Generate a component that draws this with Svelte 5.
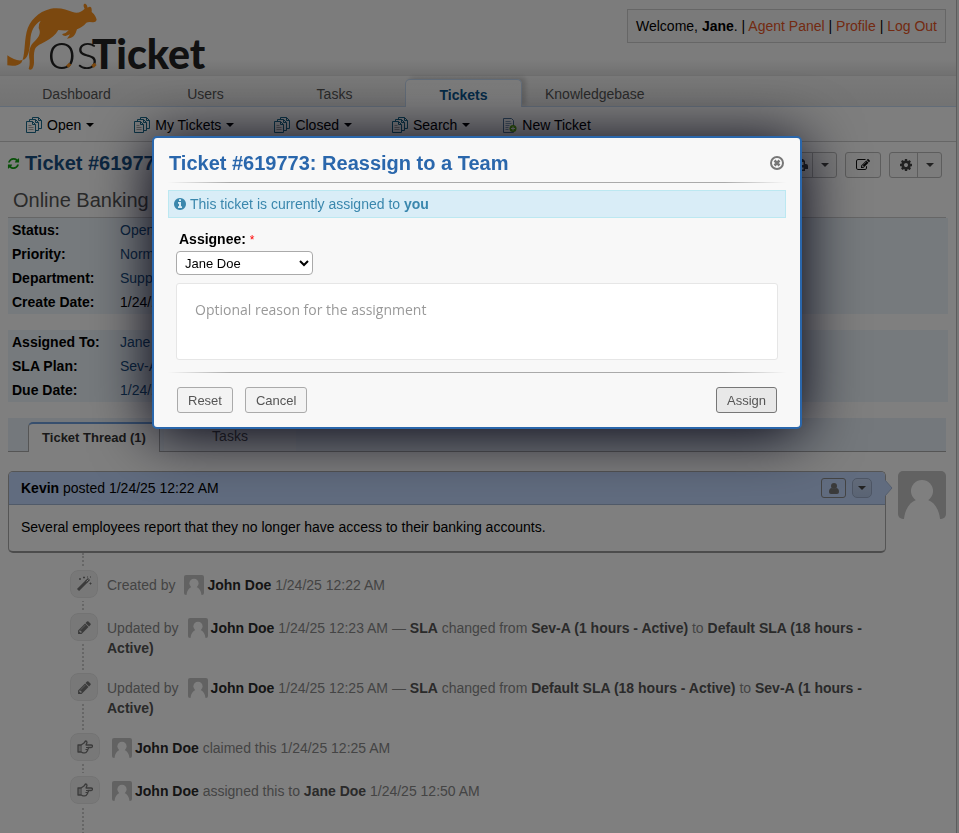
<script>
  const nav = ['Dashboard', 'Users', 'Tasks', 'Tickets', 'Knowledgebase'];
  const queues = ['Open', 'My Tickets', 'Closed', 'Search'];
  const details = [
    ['Status:', 'Open', true],
    ['Priority:', 'Normal', true],
    ['Department:', 'Support', true],
    ['Create Date:', '1/24/25 12:22 AM', false]
  ];
  const assignment = [
    ['Assigned To:', 'Jane Doe'],
    ['SLA Plan:', 'Sev-A (1 hours - Active)'],
    ['Due Date:', '1/24/25 1:22 AM']
  ];
  const events = [
    { icon: 'magic', before: 'Created by', parts: [['1/24/25 12:22 AM']] },
    {
      icon: 'pencil', before: 'Updated by',
      parts: [['1/24/25 12:23 AM — '], ['SLA', true], [' changed from '], ['Sev-A (1 hours - Active)', true], [' to '], ['Default SLA (18 hours - Active)', true]]
    },
    {
      icon: 'pencil', before: 'Updated by',
      parts: [['1/24/25 12:25 AM — '], ['SLA', true], [' changed from '], ['Default SLA (18 hours - Active)', true], [' to '], ['Sev-A (1 hours - Active)', true]]
    },
    { icon: 'hand', before: '', parts: [['claimed this 1/24/25 12:25 AM']] },
    { icon: 'hand', before: '', parts: [['assigned this to '], ['Jane Doe', true], [' 1/24/25 12:50 AM']] }
  ];
  let assignee = $state('Jane Doe');
  let reason = $state('');
</script>

{#snippet avatar(size)}
  <svg class="avatar" width={size} height={size} viewBox="0 0 48 48" aria-hidden="true">
    <rect width="48" height="48" rx="5" fill="#c4c4c4" />
    <circle cx="24" cy="20" r="11" fill="#fff" />
    <path d="M6 48C7 38 12 31 18 29h12c6 2 11 9 12 19z" fill="#fff" />
  </svg>
{/snippet}

{#snippet caret()}
  <svg width="8" height="4" viewBox="0 0 8 4" aria-hidden="true"><path d="M0 0h8L4 4z" fill="currentColor" /></svg>
{/snippet}

{#snippet pages()}
  <svg width="16" height="16" viewBox="0 0 16 16" fill="#fff" stroke="#1b6a8c" aria-hidden="true">
    <path d="M6.500 10.500v-10h6l3 3v8h-3M12.500.5v3h3" />
    <path d="M3.500 12.500v-10h6l3 3v8h-3M9.500 2.500v3h3" />
    <path d="M.5 4.500h6l3 3v8h-9zM6.500 4.500v3h3" />
    <path d="M2.500 8.500h3M2.500 10.500h5M2.500 12.500h5" stroke="#aaa" />
  </svg>
{/snippet}

{#snippet eventIcon(name)}
  {#if name === 'pencil'}
    <svg width="15" height="15" viewBox="0 0 1792 1792" fill="currentColor" aria-hidden="true"><path d="M491 1536l91-91-235-235-91 91v107h128v128h107zm523-928q0-22-22-22-10 0-17 7l-542 542q-7 7-7 17 0 22 22 22 10 0 17-7l542-542q7-7 7-17zm-54-192l416 416-832 832h-416v-416zm683 96q0 53-37 90l-166 166-416-416 166-165q36-38 90-38 53 0 91 38l235 234q37 39 37 91z" /></svg>
  {:else if name === 'magic'}
    <svg width="16" height="16" viewBox="0 0 16 16" fill="none" stroke="currentColor" aria-hidden="true">
      <path d="M2 14 10.500 5.500" stroke-width="3" />
      <path d="m10 6 3-3" stroke-width="3" /><path d="m10.500 5.500 2-2" stroke="#f4f4f4" />
      <path d="M3 3h2M4 2v2M7 1.500h2M8 .5v2M13.500 7.500h2M14.500 6.500v2M11 1h1M14 1h1" />
    </svg>
  {:else}
    <svg width="16" height="14" viewBox="0 0 16 14" fill="none" stroke="currentColor" stroke-linejoin="round" aria-hidden="true">
      <path d="M1 5h3l3-2 1.500-2q1.500 0 1.500 1.500L9 5h5q1.500 0 1.500 1.200T14 7.500h-3q1 1.300-.5 2 .5 1.300-.7 1.800-.3 1.500-2 1.500H6L4 12H1z" stroke-width="1.300" />
      <path d="M4 5v7M9 7.500h2M8.500 9.500h2" />
      <path d="M1 5h2v7H1z" fill="currentColor" fill-opacity=".4" stroke="none" />
    </svg>
  {/if}
{/snippet}

<div class="page">
  <header>
    <a class="logo" href="#home" aria-label="osTicket home">
      <svg width="220" height="74" viewBox="0 0 660 222">
        <path fill="#f7901e" d="M22 196q30 5 42-8c12-20 8-60 16-93 8-32 34-60 72-69 28-5 48 3 66 10 16 6 28-2 36-10-5-9-4-16 2-15q5 2 7 12 7-5 11 0 2 7 1 13c10 8 14 18 15 24q-3 8-12 7-12-2-19 1c-7 11-19 15-28 20l-4 11q-5 12-16 15l-10 2q6-8 9-13l-13 5q-11-1-10-6 12-2 19-11-17 1-31-1c-8 15-22 25-40 35-16 8-28 14-31 25-6 22 3 42-7 56q-6 6-11 1 4-14 3-25c-5-24 0-46 15-58 15-15 19-26 12-40q-1-12 6-22c-20 12-29 30-31 59-2 30-6 48-17 57q-22 10-52-12z" />
        <text x="142" y="207" class="logo-thin">os</text>
        <text x="275" y="207" class="logo-bold">Ticket</text>
        <path d="m198 197 9-9 7 6-8 9zM274 196l9-8 7 7-9 9z" fill="#f7901e" />
      </svg>
    </a>
    <p class="welcome">Welcome, <strong>Jane</strong>. | <a href="#agent">Agent Panel</a> | <a href="#profile">Profile</a> | <a href="#logout">Log Out</a></p>
  </header>

  <nav class="main-nav">
    {#each nav as item}
      <a href="#{item}" class:active={item === 'Tickets'}>{item}</a>
    {/each}
  </nav>
  <nav class="sub-nav">
    {#each queues as q}
      <a href="#{q}">{@render pages()}<span>{q}</span>{@render caret()}</a>
    {/each}
    <a class="new" href="#new">
      <svg width="15" height="15" viewBox="0 0 15 15" aria-hidden="true">
        <path d="M1.500.5h8l2 2v12h-10z" fill="#fff" stroke="#53789c" />
        <path d="M3.500 3.500h5M3.500 5.500h6M3.500 7.500h4M3.500 9.500h3M3.500 11.500h3" stroke="#8ba5bf" />
        <circle cx="11" cy="10.500" r="3.500" fill="#5bad0d" /><path d="M11 8.500v4M9 10.500h4" stroke="#fff" />
      </svg><span>New Ticket</span></a>
  </nav>

  <main>
    <div class="title-row">
      <h2>
        <svg width="13" height="13" viewBox="0 0 1792 1792" fill="#12a012" aria-hidden="true"><path d="M1639 1056q0 5-1 7-64 268-268 434.500t-478 166.500q-146 0-282.500-55t-243.500-157l-129 129q-19 19-45 19t-45-19-19-45v-448q0-26 19-45t45-19h448q26 0 45 19t19 45-19 45l-137 137q71 66 161 102t187 36q134 0 250-65t186-179q11-17 53-117 8-23 30-23h192q13 0 22.500 9.500t9.500 22.500zm25-800v448q0 26-19 45t-45 19h-448q-26 0-45-19t-19-45 19-45l138-138q-148-137-349-137-134 0-250 65t-186 179q-11 17-53 117-8 23-30 23h-199q-13 0-22.500-9.500t-9.500-22.500v-7q65-268 270-434.500t480-166.500q146 0 284 55.500t245 156.500l130-129q19-19 45-19t45 19 19 45z" /></svg>
        <a href="#ticket">Ticket #619773</a>
      </h2>
      <div class="tools">
        <button class="tool split" aria-label="Print">
          <span><svg width="14" height="14" viewBox="0 0 14 14" aria-hidden="true"><path d="M3 1h6l2 2v3h1q2 0 2 2v3h-3v2H3v-2H0V8q0-2 2-2h1zM4.500 2.500V7h5V4H8V2.500zm0 7v2h5v-2z" fill="#444" fill-rule="evenodd" /></svg></span>
          <span>{@render caret()}</span>
        </button>
        <button class="tool" aria-label="Edit">
          <svg width="14" height="14" viewBox="0 0 1792 1792" fill="#111" aria-hidden="true"><path d="M888 1184l116-116-152-152-116 116v56h96v96h56zm440-720q-16-16-33 1l-350 350q-17 17-1 33t33-1l350-350q17-17 1-33zm80 594v190q0 119-84.500 203.500t-203.500 84.500h-832q-119 0-203.500-84.500t-84.500-203.500v-832q0-119 84.500-203.500t203.500-84.500h832q63 0 117 25 15 7 18 23 3 17-9 29l-49 49q-14 14-32 8-23-6-45-6h-832q-66 0-113 47t-47 113v832q0 66 47 113t113 47h832q66 0 113-47t47-113v-126q0-13 9-22l64-64q15-15 35-7t20 29zm-96-738l288 288-672 672h-288v-288zm444 132l-92 92-288-288 92-92q28-28 68-28t68 28l152 152q28 28 28 68t-28 68z" /></svg>
        </button>
        <button class="tool split" aria-label="More">
          <span><svg width="14" height="14" viewBox="0 0 1792 1792" fill="#444" aria-hidden="true"><path d="M1152 896q0-106-75-181t-181-75-181 75-75 181 75 181 181 75 181-75 75-181zm512-109v222q0 12-8 23t-20 13l-185 28q-19 54-39 91 35 50 107 138 10 12 10 25t-9 23q-27 37-99 108t-94 71q-12 0-26-9l-138-108q-44 23-91 38-16 136-29 186-7 28-36 28h-222q-14 0-24.500-8.500t-11.500-21.500l-28-184q-49-16-90-37l-141 107q-10 9-25 9-14 0-25-11-126-114-165-168-7-10-7-23 0-12 8-23 15-21 51-66.500t54-70.500q-27-50-41-99l-183-27q-13-2-21-12.500t-8-23.500v-222q0-12 8-23t19-13l186-28q14-46 39-92-40-57-107-138-10-12-10-24 0-10 9-23 26-36 98.500-107.500t94.500-71.500q13 0 26 10l138 107q44-23 91-38 16-136 29-186 7-28 36-28h222q14 0 24.500 8.500t11.500 21.500l28 184q49 16 90 37l142-107q9-9 24-9 13 0 25 10 129 119 165 170 7 8 7 22 0 12-8 23-15 21-51 66.500t-54 70.500q26 50 41 98l183 28q13 2 21 12.500t8 23.500z" /></svg></span>
          <span>{@render caret()}</span>
        </button>
      </div>
    </div>

    <h3>Online Banking Access</h3>

    <section class="info">
      <table>
        <tbody>
          {#each details as [label, value, link]}
            <tr><th>{label}</th><td>{#if link}<a href="#edit">{value}</a>{:else}{value}{/if}</td></tr>
          {/each}
        </tbody>
      </table>
      <p class="user"><a href="#org">(Administrators)</a></p>
    </section>
    <section class="info">
      <table>
        <tbody>
          {#each assignment as [label, value]}
            <tr><th>{label}</th><td><a href="#edit">{value}</a></td></tr>
          {/each}
        </tbody>
      </table>
    </section>

    <nav class="thread-tabs">
      <a class="active" href="#thread">Ticket Thread (1)</a>
      <a href="#tasks">Tasks</a>
    </nav>

    <div class="post">
      <article>
        <div class="post-head">
          <p><strong>Kevin</strong> posted 1/24/25 12:22 AM</p>
          <button class="who" aria-label="Ticket owner"><svg width="10" height="11" viewBox="0 0 10 11" aria-hidden="true"><circle cx="5" cy="3" r="3" fill="#777" /><path d="M0 9q0-4 3-4 2 2 4 0 3 0 3 4 0 2-2 2H2Q0 11 0 9z" fill="#777" /></svg></button>
          <button class="menu" aria-label="Post actions">{@render caret()}</button>
          <svg class="arrow" width="8" height="16" viewBox="0 0 8 16" aria-hidden="true"><path d="M0 0v16l7-8z" fill="#c3d9ff" /><path d="m0 0 7 8-7 8" fill="none" stroke="#a9bcdc" /></svg>
        </div>
        <p class="post-body">Several employees report that they no longer have access to their banking accounts.</p>
      </article>
      {@render avatar(48)}
    </div>

    <ul class="events">
      {#each events as e}
        <li>
          <span class="badge" class:wide={e.icon === 'hand'}>{@render eventIcon(e.icon)}</span>
          <p>{e.before}<span class="face" class:lead={!e.before}>{@render avatar(20)}</span><strong class="name">John Doe</strong>{' '}{#each e.parts as [text, bold]}{#if bold}<b>{text}</b>{:else}{text}{/if}{/each}</p>
        </li>
      {/each}
    </ul>
  </main>
</div>

<div class="overlay"></div>

<div class="dialog" role="dialog" aria-modal="true" aria-labelledby="dialog-title">
  <div class="dialog-head">
    <h1 id="dialog-title">Ticket #619773: Reassign to a Team</h1>
    <button class="close" aria-label="Close"><svg width="14" height="14" viewBox="0 0 14 14" fill="none" stroke="#777" aria-hidden="true"><circle cx="7" cy="7" r="6" stroke-width="2" /><path d="m4.500 4.500 5 5m0-5-5 5" stroke-width="2.500" /></svg></button>
  </div>
  <hr />
  <p class="notice">
    <svg width="12" height="12" viewBox="128 128 1536 1536" fill="#3a87ad" aria-hidden="true"><path d="M1152 1376v-160q0-14-9-23t-23-9h-96v-512q0-14-9-23t-23-9h-320q-14 0-23 9t-9 23v160q0 14 9 23t23 9h96v320h-96q-14 0-23 9t-9 23v160q0 14 9 23t23 9h448q14 0 23-9t9-23zm-128-896v-160q0-14-9-23t-23-9h-192q-14 0-23 9t-9 23v160q0 14 9 23t23 9h192q14 0 23-9t9-23zm640 416q0 209-103 385.500t-279.500 279.500-385.500 103-385.500-103-279.500-279.500-103-385.500 103-385.500 279.500-279.500 385.500-103 385.500 103 279.500 279.500 103 385.500z" /></svg>
    <span>This ticket is currently assigned to <strong>you</strong></span>
  </p>
  <form onsubmit={(ev) => ev.preventDefault()}>
    <label for="assignee">Assignee: <span class="req">*</span></label>
    <select id="assignee" bind:value={assignee}><option>Jane Doe</option><option>John Doe</option></select>
    <textarea aria-label="Reason" placeholder="Optional reason for the assignment" bind:value={reason}></textarea>
    <hr />
    <div class="actions">
      <button type="reset">Reset</button>
      <button type="button">Cancel</button>
      <button type="submit" class="primary">Assign</button>
    </div>
  </form>
</div>

<style>
  :global(body) { background: #eee; overflow: hidden; }
  :global(body), button, select { font-family: "Liberation Sans", Arial, sans-serif; font-size: 14px; }
  * { box-sizing: border-box; }
  p, h1, h2, h3, ul { margin: 0; padding: 0; }
  a { color: #184e81; text-decoration: none; }
  svg { display: block; flex: none; }
  button { cursor: pointer; }

  .page { min-height: 100vh; margin-right: 2px; background: #fff; border-right: 1px solid #bbb; line-height: 20px; color: #000; }

  header { display: flex; justify-content: space-between; align-items: flex-start; height: 76px; padding-right: 10px; background: linear-gradient(#f8f8f8 80%, #e2e2e2); border-bottom: 1px solid #ddd; }
  .logo-thin { font-family: Lato, "Liberation Sans", sans-serif; font-weight: 300; font-size: 156px; fill: #222; }
  .logo-bold { font-family: Lato, "Liberation Sans", sans-serif; font-weight: 900; font-size: 123px; fill: #222; }
  .welcome { margin-top: 9px; padding: 6px 8px; border: 1px solid #ccc; background: #f4f4f4; }
  .welcome a { color: #e65524; }

  .main-nav { display: flex; gap: 12px; align-items: flex-end; height: 31px; padding-left: 18px; background: linear-gradient(#f3f3f3, #e6e6e6); border-bottom: 1px solid #c5d9f1; }
  .main-nav a { min-width: 117px; height: 27px; padding: 0 11px; line-height: 30px; text-align: center; color: #555; }
  .main-nav a.active { height: 28px; margin-bottom: -1px; background: linear-gradient(#f8f8f8, #fff); border: 1px solid #c5d9f1; border-bottom: 0; border-radius: 5px 5px 0 0; box-shadow: 4px -2px 4px rgba(0, 0, 0, .15); clip-path: inset(-6px -10px 0); color: #0a568e; font-weight: 700; }

  .sub-nav { display: flex; gap: 40px; height: 35px; padding: 2px 0 0 26px; align-items: center; border-bottom: 1px solid #ccc; background: #fcfcfc; }
  .sub-nav a { display: flex; align-items: center; gap: 5px; color: #000; }
  .sub-nav .new { margin-left: -8px; }

  main { padding: 10px 8px 0; }
  .title-row { display: flex; justify-content: space-between; height: 26px; padding-right: 6px; }
  h2 { display: flex; align-items: center; gap: 5px; margin-left: -1px; padding-bottom: 4px; font-size: 20px; }
  .tools { display: flex; gap: 8px; }
  .tool { display: flex; align-items: center; justify-content: center; min-width: 36px; height: 26px; padding: 0; border: 1px solid #bbb; border-radius: 3px; background: #f8f8f8; color: #444; }
  .tool.split span { display: flex; align-items: center; justify-content: center; height: 24px; width: 23px; }
  .tool.split span:first-child { width: 28px; padding-left: 4px; border-right: 1px solid #bbb; }

  h3 { margin-right: 2px; padding: 10px 5px 5px; line-height: 24px; font-weight: 400; font-size: 20px; color: #555; border-bottom: 1px solid #ccc; }
  .info { display: flex; margin: 0 0 16px; background: #edf5fb; padding-left: 4px; }
  .info table { flex: 1; border-collapse: collapse; }
  .info th { width: 108px; padding: 0; text-align: left; }
  .info td { padding: 0; height: 24px; }
  .info .user { flex: 1; padding: 2px 0 0 256px; white-space: nowrap; }

  .thread-tabs { display: flex; gap: 4px; height: 34px; margin-right: 2px; padding: 4px 0 0 20px; background: #e9f1f8; border-bottom: 1px solid #aaa; }
  .thread-tabs a { width: 132px; height: 29px; line-height: 28px; text-align: center; color: #555; background: #f0f4f9; }
  .thread-tabs a.active { height: 30px; border: 1px solid #aaa; border-top: 2px solid #6f9fdc; border-bottom: 0; border-radius: 5px 5px 0 0; background: #fff; color: #333; font-weight: 700; font-size: 13px; }

  .post { display: flex; gap: 12px; align-items: flex-start; margin: 19px 2px 0 0; }
  article { flex: 1; border: 1px solid #aaa; border-bottom: 2px solid #999; border-radius: 5px; }
  .post-head { position: relative; display: flex; align-items: center; gap: 6px; height: 33px; padding: 0 13px 0 12px; background: #c3d9ff; border-bottom: 1px solid #a0b4d2; border-radius: 4px 4px 0 0; }
  .post-head p { flex: 1; }
  .who, .menu { display: flex; align-items: center; justify-content: center; height: 20px; padding: 0; border: 1px solid #888; border-radius: 3px; background: none; color: #444; }
  .who { width: 25px; }
  .menu { width: 20px; border-color: #9aabc8; border-radius: 5px; background: linear-gradient(#c3d4f2, #b4c8e8); }
  .arrow { position: absolute; right: -8px; top: 8px; }
  .post-body { padding: 12px 12px 14px; line-height: 20px; }

  .events { list-style: none; margin-left: 74px; padding-top: 17px; border-left: 2px dotted #ccc; color: #888; min-height: 284px; }
  .events li { display: flex; gap: 9px; margin-left: -14px; padding-bottom: 15px; align-items: flex-start; }
  .badge { display: flex; align-items: center; justify-content: center; flex: none; width: 28px; height: 28px; border: 1px solid #e6e6e6; border-radius: 8px; background: #f0f0f0; outline: 3px solid #fff; color: #777; }
  .badge.wide { width: 30px; }
  .events p { padding: 5px 60px 0 0; }
  .events b { color: #555; }
  .name { color: #2a2a2a; }
  .face { display: inline-block; height: 20px; vertical-align: top; margin: 0 3px 0 9px; }
  .face.lead { margin-left: 3px; }

  .overlay { position: fixed; inset: 0; background: rgba(0, 0, 0, .5); }
  .dialog { position: fixed; top: 136px; left: 152px; right: 157px; padding: 12px 14px 14px; border: 2px solid #2a67ac; border-radius: 5px; background: #f8f8f8; box-shadow: 0 5px 60px #001; }
  .dialog-head { display: flex; justify-content: space-between; align-items: center; padding: 0 2px 0 1px; height: 26px; }
  h1 { font-size: 20px; line-height: 26px; color: #2a67ac; }
  .close { padding: 0; border: 0; background: none; }
  hr { height: 1px; margin: 6px 0 7px; border: 0; background: linear-gradient(to right, transparent, #aaa 10%, #aaa 90%, transparent); }
  .notice { display: flex; align-items: center; gap: 4px; height: 28px; padding: 0 5px; border: 1px solid #bce8f1; background: #d9edf7; color: #3a87ad; }
  form { padding: 0 8px; }
  label { display: block; margin-top: 11px; padding-left: 3px; line-height: 20px; font-weight: 700; }
  .req { color: red; font-weight: 400; font-size: 12px; }
  select { display: block; width: 137px; height: 24px; margin-top: 1px; padding: 0 4px; border: 1px solid #aaa; border-radius: 4px; background: #fff; font-size: 13px; color: #000; }
  textarea { display: block; width: 100%; height: 77px; margin: 8px 0 12px; padding: 16px 18px; resize: none; border: 1px solid #e6e6e6; border-radius: 3px; background: #fff; font: 14px/20px "Open Sans", "Noto Sans", sans-serif; }
  textarea::placeholder { color: #999; }
  form hr { margin: 0 -8px 14px; }
  .actions { display: flex; gap: 12px; padding: 0 1px; }
  .actions button { height: 26px; padding: 0 10px; border: 1px solid #aaa; border-radius: 3px; background: #f3f3f3; color: #555; font-size: 13px; }
  .actions .primary { margin-left: auto; border-color: #777; background: #e8e8e8; }
</style>
